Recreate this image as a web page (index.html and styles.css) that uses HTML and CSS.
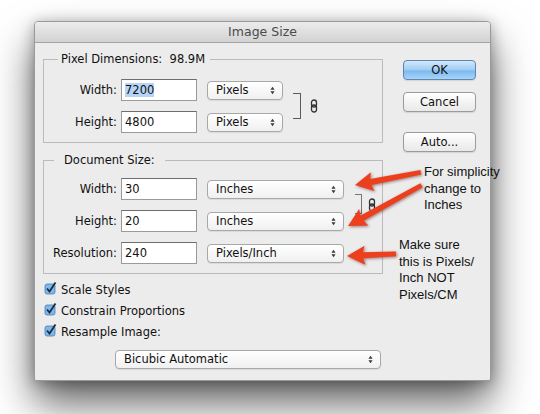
FILE: index.html
```html
<!DOCTYPE html>
<html lang="en">
<head>
  <meta charset="UTF-8">
  <title>Image Size</title>
  <link rel="stylesheet" href="styles.css">
</head>
<body>

  <div class="dialog">
    <div class="titlebar">Image Size</div>
    <div class="content">
      <div class="main">

        <fieldset class="group pixels">
          <legend>Pixel Dimensions:&nbsp; 98.9M</legend>
          <div class="rows">
            <label>Width:</label>
            <div class="field"><span class="picked">7200</span></div>
            <div class="select">Pixels
              <svg class="updown" viewBox="0 0 6 10"><path d="M0.5 4L3 0.5L5.5 4zM0.5 6L3 9.5L5.5 6z"/></svg>
            </div>
            <div class="bracket"></div>
            <svg class="link" viewBox="0 0 8 14"><rect x="1.5" y="1" width="5" height="7" rx="2.5"/><rect x="1.5" y="6" width="5" height="7" rx="2.5"/></svg>

            <label>Height:</label>
            <div class="field">4800</div>
            <div class="select">Pixels
              <svg class="updown" viewBox="0 0 6 10"><path d="M0.5 4L3 0.5L5.5 4zM0.5 6L3 9.5L5.5 6z"/></svg>
            </div>
          </div>
        </fieldset>

        <fieldset class="group doc">
          <legend>Document Size:</legend>
          <div class="rows">
            <label>Width:</label>
            <div class="field">30</div>
            <div class="select">Inches
              <svg class="updown" viewBox="0 0 6 10"><path d="M0.5 4L3 0.5L5.5 4zM0.5 6L3 9.5L5.5 6z"/></svg>
            </div>
            <div class="bracket"></div>
            <svg class="link" viewBox="0 0 8 14"><rect x="1.5" y="1" width="5" height="7" rx="2.5"/><rect x="1.5" y="6" width="5" height="7" rx="2.5"/></svg>

            <label>Height:</label>
            <div class="field">20</div>
            <div class="select">Inches
              <svg class="updown" viewBox="0 0 6 10"><path d="M0.5 4L3 0.5L5.5 4zM0.5 6L3 9.5L5.5 6z"/></svg>
            </div>

            <label>Resolution:</label>
            <div class="field">240</div>
            <div class="select">Pixels/Inch
              <svg class="updown" viewBox="0 0 6 10"><path d="M0.5 4L3 0.5L5.5 4zM0.5 6L3 9.5L5.5 6z"/></svg>
            </div>
          </div>
        </fieldset>

        <div class="checks">
          <div class="check">
            <svg class="box" viewBox="0 0 14 14"><rect x="1" y="3" width="10" height="10" rx="2"/><path d="M3 7.5L5.5 10.5L11.5 1.5"/></svg>
            Scale Styles
          </div>
          <div class="check">
            <svg class="box" viewBox="0 0 14 14"><rect x="1" y="3" width="10" height="10" rx="2"/><path d="M3 7.5L5.5 10.5L11.5 1.5"/></svg>
            Constrain Proportions
          </div>
          <div class="check">
            <svg class="box" viewBox="0 0 14 14"><rect x="1" y="3" width="10" height="10" rx="2"/><path d="M3 7.5L5.5 10.5L11.5 1.5"/></svg>
            Resample Image:
          </div>
        </div>

        <div class="select method">Bicubic Automatic
          <svg class="updown" viewBox="0 0 6 10"><path d="M0.5 4L3 0.5L5.5 4zM0.5 6L3 9.5L5.5 6z"/></svg>
        </div>
      </div>

      <div class="buttons">
        <button class="btn default">OK</button>
        <button class="btn cancel">Cancel</button>
        <button class="btn auto">Auto...</button>
      </div>
    </div>
  </div>

  <div class="note note-units">For simplicity<br>change to<br>Inches</div>
  <div class="note note-res">Make sure<br>this is Pixels/<br>Inch NOT<br>Pixels/CM</div>

  <!-- red call-out arrows, tip at the origin of each group -->
  <svg class="arrows" width="540" height="414" viewBox="0 0 540 414">
    <g transform="translate(355 185) rotate(-11)">
      <polygon points="0,0 18,-9.5 16,-3 67,-2.2 67,2.2 16,3 18,9.5"/>
    </g>
    <g transform="translate(348 226) rotate(-29)">
      <polygon points="0,0 18,-9.5 16,-3 84,-2.2 84,2.2 16,3 18,9.5"/>
    </g>
    <g transform="translate(347 256) rotate(-2.5)">
      <polygon points="0,0 18,-9.5 16,-3 49,-2.4 49,2.4 16,3 18,9.5"/>
    </g>
  </svg>

</body>
</html>
```

FILE: styles.css
```css
body {
  margin: 0;
  width: 540px;
  height: 414px;
  background: #fff;
  font-family: 'DejaVu Sans', sans-serif;
  font-size: 11.5px;
  color: #111;
  position: relative;
  overflow: hidden;
}
.dialog {
  box-sizing: border-box;
  margin: 21px 0 0 34px;
  width: 457px;
  height: 360px;
  background: #ececec;
  border: 1px solid #9a9a9a;
  border-radius: 4px 4px 2px 2px;
  box-shadow: 0 22px 40px rgba(0, 0, 0, 0.62), 0 2px 14px rgba(0, 0, 0, 0.3);
}
.titlebar {
  height: 20px;
  line-height: 20px;
  text-align: center;
  font-size: 12.5px;
  color: #4a4a4a;
  background: linear-gradient(#ececec, #d2d2d2);
  border-bottom: 1px solid #a3a3a3;
  border-radius: 3px 3px 0 0;
}
.content {
  display: flex;
  padding: 9px 14px 0 8px;
}
.main {
  width: 340px;
}
.group {
  margin: 0;
  padding: 13px 0 9px 0;
  border: 1px solid #bbbbbb;
}
.group legend {
  padding: 0 5px 0 3px;
  margin-left: 14px;
  line-height: 14px;
}
.doc {
  margin-top: 10px;
  padding-top: 11px;
}
.doc legend {
  margin-left: 10px;
  padding: 0 10px;
}
.rows {
  display: grid;
  grid-template-columns: 77px 86px 86px 13px auto;
  row-gap: 10px;
  align-items: center;
}
.doc .rows {
  grid-template-columns: 77px 86px 148px 11px auto;
}
.rows label {
  text-align: right;
  padding-right: 4px;
}
.field {
  box-sizing: border-box;
  width: 76px;
  height: 22px;
  line-height: 20px;
  padding-left: 3px;
  background: #fff;
  border: 1px solid #9a9a9a;
  border-top-color: #6e6e6e;
}
.picked {
  background: #b5d4f6;
}
.select {
  box-sizing: border-box;
  position: relative;
  width: 76px;
  height: 19px;
  line-height: 17px;
  padding-left: 8px;
  border: 1px solid #a8a8a8;
  border-radius: 4px;
  background: linear-gradient(#ffffff, #f0f0f0);
  box-shadow: 0 1px 1px rgba(0, 0, 0, 0.08);
}
.doc .select {
  width: 137px;
}
.updown {
  position: absolute;
  right: 7px;
  top: 4px;
  width: 5px;
  height: 9px;
  fill: #3a3a3a;
}
.bracket {
  grid-row: span 2;
  align-self: stretch;
  margin: 14px 0;
  width: 7px;
  border: 1px solid #5a5a5a;
  border-left: none;
}
.doc .bracket {
  width: 6px;
  margin: 16px 0 18px;
  border-color: #777;
}
.link {
  grid-row: span 2;
  width: 8px;
  height: 14px;
  margin-left: 4px;
  fill: none;
  stroke: #333;
  stroke-width: 1.3;
}
.doc .link {
  margin-left: 2px;
}
.checks {
  margin-top: 5px;
  padding-left: 1px;
}
.check {
  display: flex;
  align-items: center;
  gap: 3px;
  height: 21px;
}
.box {
  width: 14px;
  height: 14px;
  margin-top: -3px;
}
.box rect {
  fill: #7db7ec;
  stroke: #4d7eb1;
  stroke-width: 0.8;
}
.box path {
  fill: none;
  stroke: #1c2a3a;
  stroke-width: 1.8;
}
.select.method {
  width: 266px;
  margin: 8px 0 0 72px;
}
.buttons {
  display: flex;
  flex-direction: column;
  margin-left: 20px;
}
.btn {
  width: 73px;
  height: 20px;
  padding: 0;
  font-family: 'DejaVu Sans', sans-serif;
  font-size: 11.5px;
  color: #111;
  border: 1px solid #9b9b9b;
  border-radius: 4px;
  background: linear-gradient(#ffffff, #f1f1f1 60%, #e9e9e9);
  box-shadow: 0 1px 1px rgba(0, 0, 0, 0.1);
}
.default {
  margin-top: 8px;
  border-color: #5c86b4;
  background: linear-gradient(#d2e8fb, #9fccf3 50%, #7ab9ef 55%, #a9d4f7);
}
.cancel {
  margin-top: 12px;
}
.auto {
  margin-top: 20px;
}
.note {
  position: absolute;
  font-family: 'Liberation Sans', sans-serif;
  font-size: 13px;
  line-height: 16.6px;
  color: #111;
}
.note-units {
  left: 424px;
  top: 164px;
}
.note-res {
  left: 399px;
  top: 237px;
}
.arrows {
  position: absolute;
  left: 0;
  top: 0;
  fill: #ec3f1d;
  filter: drop-shadow(1px 1px 1.5px rgba(80, 0, 0, 0.5));
}
```
